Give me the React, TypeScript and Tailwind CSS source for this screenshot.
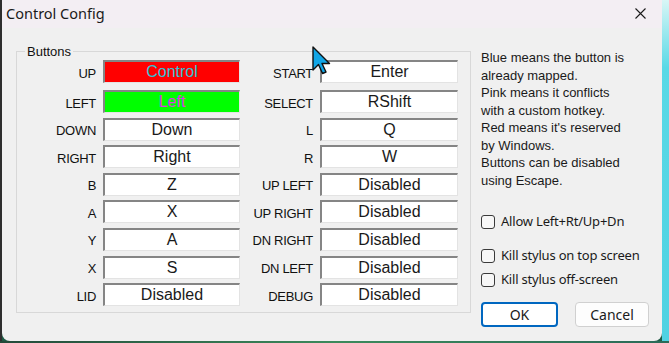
import React from "react";

type Binding = { label: string; value: string; bg?: string; fg?: string };

const leftKeys: Binding[] = [
  { label: "UP", value: "Control", bg: "bg-[#ff0000]", fg: "text-[#2fc3d6]" },
  { label: "LEFT", value: "Left", bg: "bg-[#00ff00]", fg: "text-[#de3ce8]" },
  { label: "DOWN", value: "Down" },
  { label: "RIGHT", value: "Right" },
  { label: "B", value: "Z" },
  { label: "A", value: "X" },
  { label: "Y", value: "A" },
  { label: "X", value: "S" },
  { label: "LID", value: "Disabled" },
];

const rightKeys: Binding[] = [
  { label: "START", value: "Enter" },
  { label: "SELECT", value: "RShift" },
  { label: "L", value: "Q" },
  { label: "R", value: "W" },
  { label: "UP LEFT", value: "Disabled" },
  { label: "UP RIGHT", value: "Disabled" },
  { label: "DN RIGHT", value: "Disabled" },
  { label: "DN LEFT", value: "Disabled" },
  { label: "DEBUG", value: "Disabled" },
];

const uiFont = { fontFamily: "'Noto Sans', 'Open Sans', sans-serif" };
const classicFont = { fontFamily: "'Liberation Sans', Arial, sans-serif" };

function KeyColumn({ keys, labelW, fieldW }: { keys: Binding[]; labelW: string; fieldW: string }) {
  return (
    <div className="flex flex-col">
      {keys.map((k, i) => (
        <div key={k.label} className={`flex items-center ${i === 0 ? "" : i === 1 ? "mt-[7px]" : "mt-[4.6px]"}`}>
          <span className={`${labelW} text-right pr-[7px] text-[13px] leading-none text-[#111] tracking-[-0.3px] pt-[3px]`}>
            {k.label}
          </span>
          <div
            className={`${fieldW} h-[23px] flex items-center justify-center border-t-2 border-l-2 border-r border-b border-t-[#858585] border-l-[#858585] border-r-[#e3e3e3] border-b-[#e3e3e3] ${k.bg ?? "bg-white"} ${k.fg ?? "text-[#1a1a1a]"} text-[16px] leading-none`}
          >
            {k.value}
          </div>
        </div>
      ))}
    </div>
  );
}

function Check({ label, className }: { label: string; className: string }) {
  return (
    <label className={`flex items-center h-[20px] ${className}`} style={uiFont}>
      <span className="w-[14px] h-[14px] rounded-[3px] border border-[#3a3a3a] bg-[#f7f7f7]" />
      <span className="ml-[6px] text-[13px] text-[#1a1a1a] tracking-[-0.2px]">{label}</span>
    </label>
  );
}

export default function App() {
  return (
    <div className="w-[669px] h-[343px] flex flex-col bg-[#1f5a45] overflow-hidden">
      <div className="flex h-[341px]">
        <div className="w-[2px] bg-[#2e2e2e]" />
        <div className="relative w-[660px] h-full flex flex-col bg-[#f0f0f0] rounded-b-[8px] overflow-hidden">
          {/* title bar */}
          <div className="h-[28px] bg-[#f3eef3] flex items-center justify-between pl-[4px] pr-[16px]" style={uiFont}>
            <span className="text-[14.5px] text-[#1a1a1a]">Control Config</span>
            <svg width="11" height="11" viewBox="0 0 11 11" className="mt-[-2px]">
              <path d="M0.5 0.5 L10.5 10.5 M10.5 0.5 L0.5 10.5" stroke="#1a1a1a" strokeWidth="1.1" />
            </svg>
          </div>

          {/* body */}
          <div className="flex pt-[17px]">
            <fieldset
              className="ml-[14px] w-[455px] h-[268px] border border-[#d8d8d8] p-0 m-0"
              style={classicFont}
            >
              <legend className="ml-[8px] px-[2px] text-[13px] leading-none text-[#111]">Buttons</legend>
              <div className="flex mt-[2px]">
                <KeyColumn keys={leftKeys} labelW="w-[86px]" fieldW="w-[137px]" />
                <KeyColumn keys={rightKeys} labelW="w-[80px]" fieldW="w-[138px]" />
              </div>
            </fieldset>

            <div className="ml-[10px] mt-[4px] w-[175px] shrink-0 flex flex-col" style={classicFont}>
              <p className="text-[13px] leading-[17.5px] text-[#1a1a1a]">
                Blue means the button is
                <br />
                already mapped.
                <br />
                Pink means it conflicts
                <br />
                with a custom hotkey.
                <br />
                Red means it's reserved
                <br />
                by Windows.
                <br />
                Buttons can be disabled
                <br />
                using Escape.
              </p>
              <Check label="Allow Left+Rt/Up+Dn" className="mt-[23px]" />
              <Check label="Kill stylus on top screen" className="mt-[14px]" />
              <Check label="Kill stylus off-screen" className="mt-[4px]" />
              <div className="flex mt-[12px] gap-[17px]" style={uiFont}>
                <button className="w-[77px] h-[25px] shrink-0 rounded-[4px] border-2 border-[#0067c0] bg-white text-[14px] text-[#1a1a1a]">
                  OK
                </button>
                <button className="w-[74px] h-[25px] shrink-0 rounded-[4px] border border-[#d0d0d0] bg-[#fdfdfd] text-[14px] text-[#1a1a1a]">
                  Cancel
                </button>
              </div>
            </div>
          </div>

          {/* mouse pointer */}
          <svg width="22" height="30" viewBox="0 0 22 30" className="absolute left-[310px] top-[46px]">
            <path d="M1 1 L1 24 L6.5 18.5 L10.5 27.5 L14 26 L10 17.5 L17.5 17.5 Z" fill="#12a6e6" stroke="#111" strokeWidth="1.4" strokeLinejoin="round" />
          </svg>
        </div>
        <div className="flex-1 bg-[linear-gradient(to_bottom,#d8f6f6,#59d9e6_20%,#4fd2e2)]" />
      </div>
      <div className="h-[2px] bg-[linear-gradient(to_right,#234a3a,#3c8a5c,#2a6a58)]" />
    </div>
  );
}
